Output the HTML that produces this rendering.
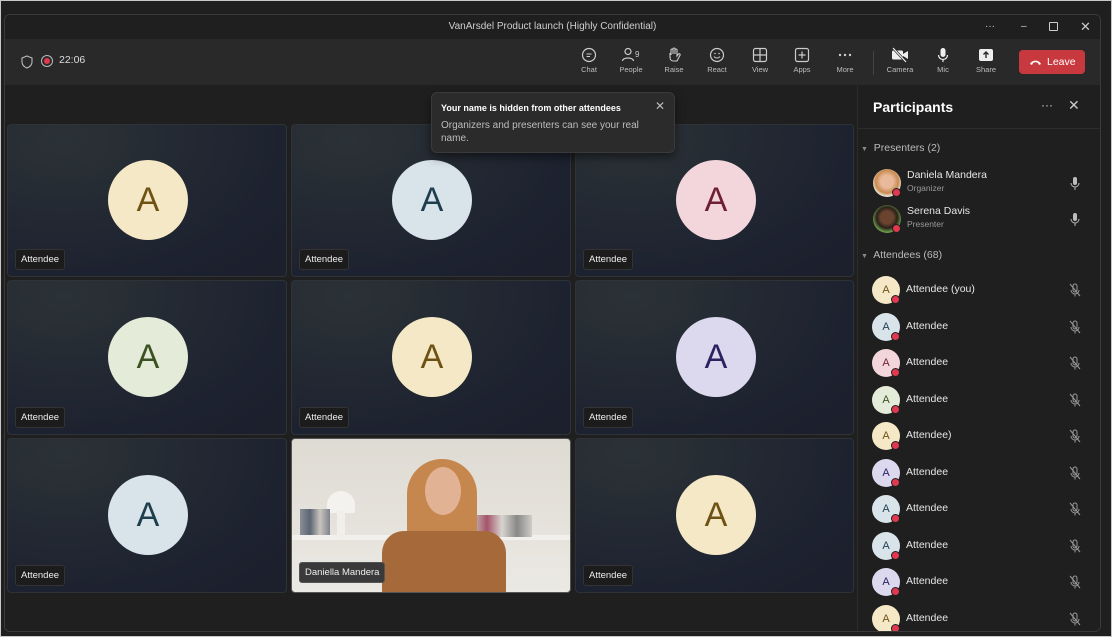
<!DOCTYPE html>
<html><head><meta charset="utf-8"><style>
*{box-sizing:border-box;margin:0;padding:0}
body{width:1112px;height:637px;background:#c8c8c8;font-family:"Segoe UI","Liberation Sans",sans-serif;overflow:hidden;position:relative}
.top{position:absolute;left:1px;top:1px;width:1110px;height:635px;background:#1f1f1f}
.win{position:absolute;left:4px;top:14px;width:1097px;height:618px;border:1px solid #3a3a3a;border-radius:6px;background:#1f1f1f;overflow:hidden}
.title{position:absolute;left:0;top:0;width:100%;height:24px;background:#1f1f1f;color:#cfcfcf;font-size:10px;text-align:center;line-height:24px}
.tb{position:absolute;left:0;top:24px;width:100%;height:46px;background:#292929}
.ti{position:absolute;top:8px;width:40px;text-align:center;color:#bdbdbd;font-size:7.5px}
.ti svg{display:block;margin:0 auto 2px}
.tile{position:absolute;width:280px;border-radius:4px;border:1px solid #2e3338;background:radial-gradient(ellipse at 20% 10%,#2b3236,#1d2230 70%,#1c1f2c)}
.av{position:absolute;left:100px;top:36px;width:80px;height:80px;border-radius:50%;text-align:center;line-height:80px;font-size:34px}
.lab{position:absolute;left:7px;bottom:6px;height:21px;padding:0 5px;background:#1c1c1c;border:1px solid #333;border-radius:3px;color:#eee;font-size:9.5px;line-height:19px}
.panel{position:absolute;left:852px;top:70px;width:243px;height:547px;background:#1f1f1f;border-left:1px solid #2c2c2c}
.row{position:absolute;left:15px;height:30px;width:220px;color:#e6e6e6;font-size:10.5px}
.ra{position:absolute;left:0;top:0;width:28px;height:28px;border-radius:50%;text-align:center;line-height:28px;font-size:11px}
.dot{position:absolute;left:19px;top:19px;width:9px;height:9px;border-radius:50%;background:#e0394f;border:1px solid #1f1f1f}
.rn{position:absolute;left:34px;top:7px}
.mic{position:absolute;left:197px;top:7px}
</style></head><body>
<div class="top"></div>
<div class="win">
<div class="title">VanArsdel Product launch (Highly Confidential)
<span style="position:absolute;left:980px;top:0;color:#ccc">···</span>
<span style="position:absolute;left:1016px;top:0;color:#ccc">–</span>
<span style="position:absolute;left:1044px;top:7px;width:9px;height:9px;border:1px solid #ccc;border-radius:1px"></span>
<span style="position:absolute;left:1075px;top:0;font-size:13px;color:#ccc">✕</span>
</div>
<div class="tb">
<svg style="position:absolute;left:16px;top:16px" width="12" height="14" viewBox="0 0 12 14"><path d="M6 1 L11 3 V7 C11 10 8.5 12 6 13 C3.5 12 1 10 1 7 V3 Z" fill="none" stroke="#bbb" stroke-width="1.1"/></svg>
<div style="position:absolute;left:36px;top:16px;width:12px;height:12px;border-radius:50%;border:1px solid #bbb"></div>
<div style="position:absolute;left:39px;top:19px;width:6px;height:6px;border-radius:50%;background:#e0394f"></div>
<div style="position:absolute;left:54px;top:15px;color:#ddd;font-size:10.5px">22:06</div>
<div class="ti" style="left:564px"><svg width="16" height="16" viewBox="0 0 16 16"><circle cx="8" cy="8" r="6.5" fill="none" stroke="#ccc" stroke-width="1.2"/><path d="M5.5 7h5M5.5 9.5h3.5" stroke="#ccc"/></svg>Chat</div>
<div class="ti" style="left:606px"><svg width="20" height="16" viewBox="0 0 20 16"><circle cx="7" cy="4.5" r="3" fill="none" stroke="#ccc" stroke-width="1.2"/><path d="M1.5 14c0-4 11-4 11 0" fill="none" stroke="#ccc" stroke-width="1.2"/><text x="14" y="10" fill="#ccc" font-size="8" font-family="Liberation Sans">9</text></svg>People</div>
<div class="ti" style="left:649px"><svg width="16" height="16" viewBox="0 0 16 16"><path d="M5 8V3a1 1 0 012 0v4V2a1 1 0 012 0v5V3a1 1 0 012 0v6l1.5-2a1 1 0 011.5 1.3L11 14H7C5 14 4 12 4 10V6" fill="none" stroke="#ccc" stroke-width="1.1"/></svg>Raise</div>
<div class="ti" style="left:692px"><svg width="16" height="16" viewBox="0 0 16 16"><circle cx="8" cy="8" r="6.5" fill="none" stroke="#ccc" stroke-width="1.2"/><circle cx="6" cy="6.5" r=".8" fill="#ccc"/><circle cx="10" cy="6.5" r=".8" fill="#ccc"/><path d="M5 9.5c1.5 2 4.5 2 6 0" fill="none" stroke="#ccc"/></svg>React</div>
<div class="ti" style="left:735px"><svg width="16" height="16" viewBox="0 0 16 16"><rect x="1.5" y="1.5" width="13" height="13" rx="2" fill="none" stroke="#ccc" stroke-width="1.2"/><path d="M8 1.5v13M1.5 8h13" stroke="#ccc" stroke-width="1.2"/></svg>View</div>
<div class="ti" style="left:777px"><svg width="16" height="16" viewBox="0 0 16 16"><rect x="1.5" y="1.5" width="13" height="13" rx="2" fill="none" stroke="#ccc" stroke-width="1.2"/><path d="M8 4.5v7M4.5 8h7" stroke="#ccc" stroke-width="1.2"/></svg>Apps</div>
<div class="ti" style="left:820px"><svg width="16" height="16" viewBox="0 0 16 16"><circle cx="3" cy="8" r="1.2" fill="#ccc"/><circle cx="8" cy="8" r="1.2" fill="#ccc"/><circle cx="13" cy="8" r="1.2" fill="#ccc"/></svg>More</div>
<div style="position:absolute;left:868px;top:12px;width:1px;height:24px;background:#444"></div>
<div class="ti" style="left:875px"><svg width="18" height="16" viewBox="0 0 18 16"><rect x="1" y="3.5" width="11" height="9" rx="1.5" fill="#eee"/><path d="M12 7l5-3v8l-5-3z" fill="#eee"/><path d="M2 1l13 14" stroke="#292929" stroke-width="2.5"/><path d="M2 1l13 14" stroke="#eee" stroke-width="1.2"/></svg>Camera</div>
<div class="ti" style="left:918px"><svg width="16" height="16" viewBox="0 0 16 16"><rect x="5.5" y="1" width="5" height="9" rx="2.5" fill="#eee"/><path d="M3.5 8a4.5 4.5 0 009 0M8 12.5V15" fill="none" stroke="#eee" stroke-width="1.2"/></svg>Mic</div>
<div class="ti" style="left:961px"><svg width="16" height="16" viewBox="0 0 16 16"><rect x="1" y="2" width="14" height="12" rx="2" fill="#eee"/><path d="M8 11V5M5.5 7.5L8 5l2.5 2.5" fill="none" stroke="#292929" stroke-width="1.4"/></svg>Share</div>
<div style="position:absolute;left:1014px;top:11px;width:66px;height:24px;background:#c8383f;border-radius:4px;color:#fff;font-size:10.5px;line-height:24px;padding-left:28px">Leave
<svg style="position:absolute;left:10px;top:8px" width="13" height="8" viewBox="0 0 13 8"><path d="M1 6C3 1.5 10 1.5 12 6L10 7 9 5C7.5 4 5.5 4 4 5L3 7Z" fill="#fff"/></svg></div>
</div>

<div class="tile" style="left:2px;top:109px;height:153px"><div class="av" style="background:#f5e8c6;color:#6e5213;top:35px">A</div><div class="lab">Attendee</div></div>
<div class="tile" style="left:286px;top:109px;height:153px"><div class="av" style="background:#d8e3ea;color:#1e3e4e;top:35px">A</div><div class="lab">Attendee</div></div>
<div class="tile" style="left:570px;top:109px;height:153px;width:279px"><div class="av" style="background:#f3d5dc;color:#6e1f36;top:35px">A</div><div class="lab">Attendee</div></div>
<div class="tile" style="left:2px;top:265px;height:155px"><div class="av" style="background:#e4ebd8;color:#3b5222">A</div><div class="lab">Attendee</div></div>
<div class="tile" style="left:286px;top:265px;height:155px"><div class="av" style="background:#f5e8c6;color:#6e5213">A</div><div class="lab">Attendee</div></div>
<div class="tile" style="left:570px;top:265px;height:155px;width:279px"><div class="av" style="background:#dcd9ef;color:#2b2260">A</div><div class="lab">Attendee</div></div>
<div class="tile" style="left:2px;top:423px;height:155px"><div class="av" style="background:#d8e3ea;color:#1e3e4e">A</div><div class="lab">Attendee</div></div>
<div class="tile" style="left:286px;top:423px;height:155px;background:linear-gradient(#dedbd3,#e6e3dc 60%,#ebe9e4);overflow:hidden;border-color:#555">
 <div style="position:absolute;left:0;top:96px;width:280px;height:5px;background:#f2f0ec"></div>
 <div style="position:absolute;left:35px;top:52px;width:28px;height:22px;border-radius:14px 14px 2px 2px;background:#f4f2ee"></div>
 <div style="position:absolute;left:45px;top:72px;width:8px;height:26px;background:#f1efea"></div>
 <div style="position:absolute;left:8px;top:70px;width:30px;height:26px;background:linear-gradient(90deg,#8a8f96,#5b6675,#c9c4be,#7d838c)"></div>
 <div style="position:absolute;left:180px;top:76px;width:60px;height:22px;background:linear-gradient(90deg,#c7c2bc,#a4546a,#d8d5d0,#888,#cfccc6)"></div>
 <div style="position:absolute;left:115px;top:20px;width:70px;height:110px;border-radius:35px 35px 10px 10px;background:#c6874e"></div>
 <div style="position:absolute;left:133px;top:28px;width:36px;height:48px;border-radius:50%;background:#e2b294"></div>
 <div style="position:absolute;left:90px;top:92px;width:124px;height:70px;border-radius:22px 22px 0 0;background:#a66a3a"></div>
 <div class="lab" style="background:#3a3a3a;border-color:#555;bottom:9px">Daniella Mandera</div>
</div>
<div class="tile" style="left:570px;top:423px;height:155px;width:279px"><div class="av" style="background:#f5e8c6;color:#6e5213">A</div><div class="lab">Attendee</div></div>

<div style="position:absolute;left:426px;top:77px;width:244px;height:61px;background:#2b2b2b;border:1px solid #3a3a3a;border-radius:6px;box-shadow:0 4px 10px rgba(0,0,0,.5);color:#fff">
 <div style="position:absolute;left:9px;top:10px;font-size:9px;font-weight:bold">Your name is hidden from other attendees</div>
 <div style="position:absolute;left:223px;top:6px;font-size:12px;color:#bbb">✕</div>
 <div style="position:absolute;left:9px;top:27px;width:220px;font-size:10px;color:#bdbdbd;line-height:12.5px">Organizers and presenters can see your real name.</div>
</div>

<div class="panel">
 <div style="position:absolute;left:15px;top:14px;color:#fff;font-size:14px;font-weight:bold">Participants</div>
 <div style="position:absolute;left:183px;top:13px;color:#ccc;font-size:12px">···</div>
 <div style="position:absolute;left:210px;top:12px;color:#ccc;font-size:14px">✕</div>
 <div style="position:absolute;left:0;top:43px;width:100%;height:1px;background:#2c2c2c"></div>
 <div style="position:absolute;left:3px;top:57px;color:#bbb;font-size:10.5px"><span style="font-size:7px;color:#888">▼</span>&nbsp; Presenters (2)</div>
 <div class="row" style="top:84px"><div class="ra" style="background:radial-gradient(circle at 50% 45%,#e9b99c 30%,#c98a4e 55%,#e8e2d6 70%)"></div><div class="dot"></div><div class="rn" style="top:0">Daniela Mandera<div style="font-size:8.5px;color:#999;margin-top:2px">Organizer</div></div>
 <svg class="mic" style="top:8px" width="10" height="13" viewBox="0 0 10 13"><rect x="3" y="0" width="4" height="8" rx="2" fill="#bbb"/><path d="M1 6a4 4 0 008 0M5 10v3" fill="none" stroke="#bbb"/></svg></div>
 <div class="row" style="top:120px"><div class="ra" style="background:radial-gradient(circle at 50% 45%,#6b4430 30%,#2a2119 50%,#6c9a4a 70%)"></div><div class="dot"></div><div class="rn" style="top:0">Serena Davis<div style="font-size:8.5px;color:#999;margin-top:2px">Presenter</div></div>
 <svg class="mic" style="top:8px" width="10" height="13" viewBox="0 0 10 13"><rect x="3" y="0" width="4" height="8" rx="2" fill="#bbb"/><path d="M1 6a4 4 0 008 0M5 10v3" fill="none" stroke="#bbb"/></svg></div>
 <div style="position:absolute;left:3px;top:164px;color:#bbb;font-size:10.5px"><span style="font-size:7px;color:#888">▼</span>&nbsp; Attendees (68)</div>
</div>
<div id="list"></div>
</div>
<script>
var c=[["#f5e8c6","#6e5213","Attendee (you)"],["#d8e3ea","#1e3e4e","Attendee"],["#f3d5dc","#6e1f36","Attendee"],["#e4ebd8","#3b5222","Attendee"],["#f5e8c6","#6e5213","Attendee)"],["#dcd9ef","#2b2260","Attendee"],["#d8e3ea","#1e3e4e","Attendee"],["#d8e3ea","#1e3e4e","Attendee"],["#dcd9ef","#2b2260","Attendee"],["#f5e8c6","#6e5213","Attendee"]];
var h="";c.forEach(function(a,i){var t=Math.round(261+i*36.5);
h+='<div class="row" style="left:867px;top:'+t+'px"><div class="ra" style="background:'+a[0]+';color:'+a[1]+'">A</div><div class="dot"></div><div class="rn">'+a[2]+'</div><svg class="mic" width="12" height="14" viewBox="0 0 12 14"><rect x="4" y="1" width="4" height="8" rx="2" fill="none" stroke="#999"/><path d="M2 7a4 4 0 008 0M6 11v2.5M1 1l10 12" fill="none" stroke="#999"/></svg></div>';});
document.getElementById("list").outerHTML=h;
</script>
</body></html>
